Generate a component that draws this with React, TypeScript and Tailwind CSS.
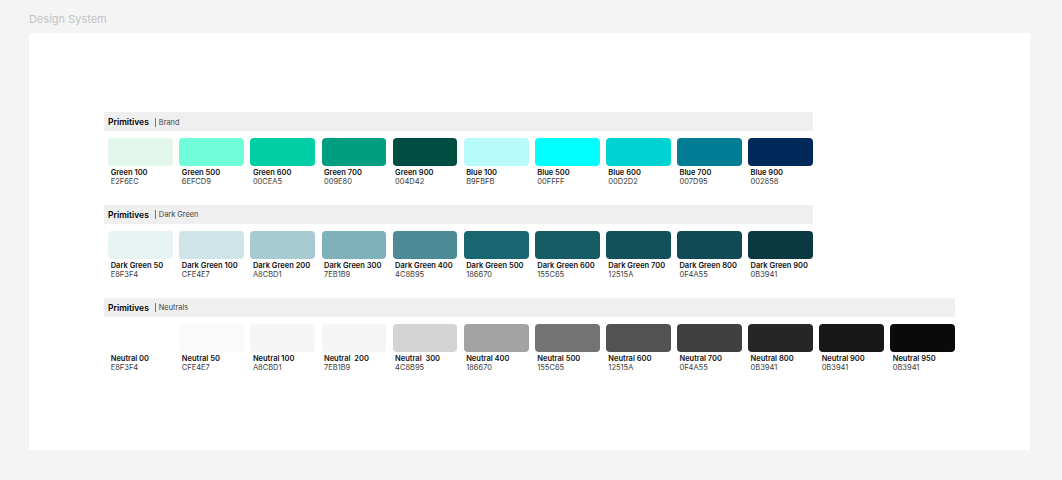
type Swatch = { name: string; hex: string; color: string };

const brand: Swatch[] = [
  { name: "Green 100", hex: "E2F6EC", color: "bg-[#e2f6ec]" },
  { name: "Green 500", hex: "6EFCD9", color: "bg-[#6efcd9]" },
  { name: "Green 600", hex: "00CEA5", color: "bg-[#00cea5]" },
  { name: "Green 700", hex: "009E80", color: "bg-[#009e80]" },
  { name: "Green 900", hex: "004D42", color: "bg-[#004d42]" },
  { name: "Blue 100", hex: "B9FBFB", color: "bg-[#b9fbfb]" },
  { name: "Blue 500", hex: "00FFFF", color: "bg-[#00ffff]" },
  { name: "Blue 600", hex: "00D2D2", color: "bg-[#00d2d2]" },
  { name: "Blue 700", hex: "007D95", color: "bg-[#007d95]" },
  { name: "Blue 900", hex: "002858", color: "bg-[#002858]" },
];

const darkGreen: Swatch[] = [
  { name: "Dark Green 50", hex: "E8F3F4", color: "bg-[#e8f3f4]" },
  { name: "Dark Green 100", hex: "CFE4E7", color: "bg-[#cfe4e7]" },
  { name: "Dark Green 200", hex: "A8CBD1", color: "bg-[#a8cbd1]" },
  { name: "Dark Green 300", hex: "7EB1B9", color: "bg-[#7eb1b9]" },
  { name: "Dark Green 400", hex: "4C8B95", color: "bg-[#4c8b95]" },
  { name: "Dark Green 500", hex: "186670", color: "bg-[#186670]" },
  { name: "Dark Green 600", hex: "155C65", color: "bg-[#155c65]" },
  { name: "Dark Green 700", hex: "12515A", color: "bg-[#12515a]" },
  { name: "Dark Green 800", hex: "0F4A55", color: "bg-[#0f4a55]" },
  { name: "Dark Green 900", hex: "0B3941", color: "bg-[#0b3941]" },
];

const neutrals: Swatch[] = [
  { name: "Neutral 00", hex: "E8F3F4", color: "bg-white" },
  { name: "Neutral 50", hex: "CFE4E7", color: "bg-[#fafafa]" },
  { name: "Neutral 100", hex: "A8CBD1", color: "bg-[#f5f5f5]" },
  { name: "Neutral  200", hex: "7EB1B9", color: "bg-[#f5f5f5]" },
  { name: "Neutral  300", hex: "4C8B95", color: "bg-[#d4d4d4]" },
  { name: "Neutral 400", hex: "186670", color: "bg-[#a3a3a3]" },
  { name: "Neutral 500", hex: "155C65", color: "bg-[#737373]" },
  { name: "Neutral 600", hex: "12515A", color: "bg-[#525252]" },
  { name: "Neutral 700", hex: "0F4A55", color: "bg-[#404040]" },
  { name: "Neutral 800", hex: "0B3941", color: "bg-[#262626]" },
  { name: "Neutral 900", hex: "0B3941", color: "bg-[#171717]" },
  { name: "Neutral 950", hex: "0B3941", color: "bg-[#0a0a0a]" },
];

function Palette({ label, swatches }: { label: string; swatches: Swatch[] }) {
  return (
    <section className="w-fit">
      <div className="flex h-[19px] items-center bg-[#efefef] pl-1 pt-px">
        <span className="text-[8.5px] font-semibold text-black">Primitives</span>
        <span className="ml-[6px] border-l border-[#777] pl-[3px] text-[7.4px] leading-[9px] text-[#444]">{label}</span>
      </div>
      <div className="mt-[7px] flex gap-[6.3px] pl-[4.3px]">
        {swatches.map((s) => (
          <div key={s.name} className="w-[64.8px]">
            <div className={`h-[28px] rounded-[4px] ${s.color}`} />
            <div className="mt-[2px] pl-[2.4px] text-[7.5px] leading-[9.3px] whitespace-pre">
              <div className="font-semibold text-[#111]">{s.name}</div>
              <div className="text-[#3a3a3a]">{s.hex}</div>
            </div>
          </div>
        ))}
      </div>
    </section>
  );
}

export default function App() {
  return (
    <div className="h-[480px] w-[1062px] overflow-hidden bg-[#f4f4f4] pl-[29px] font-['Inter',sans-serif]">
      <div className="flex h-[33px] items-center pt-[5px] text-[11px] text-[#c4c4c4]">Design System</div>
      <main className="flex h-[417px] w-[1001px] flex-col gap-[18.4px] bg-white pl-[75px] pt-[79px]">
        <Palette label="Brand" swatches={brand} />
        <Palette label="Dark Green" swatches={darkGreen} />
        <Palette label="Neutrals" swatches={neutrals} />
      </main>
    </div>
  );
}
